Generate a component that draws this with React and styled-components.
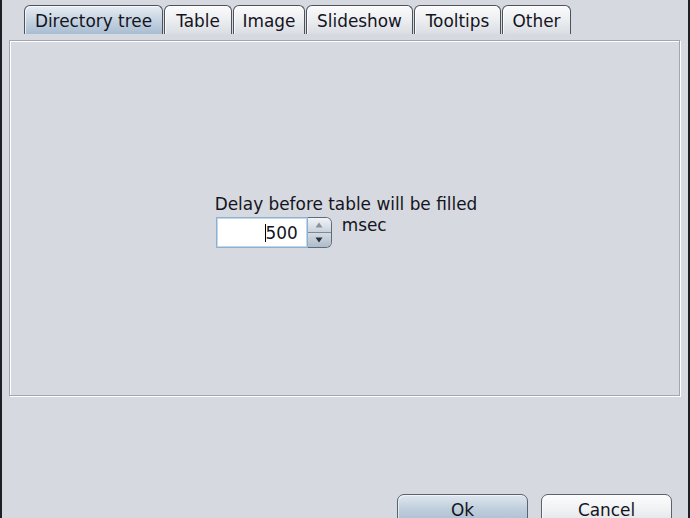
import React from "react";
import styled, { createGlobalStyle } from "styled-components";

const Global = createGlobalStyle`
  html, body { margin: 0; padding: 0; overflow: hidden; }
  body { background: #d6d9df; font-family: "DejaVu Sans", sans-serif; }
`;

const Window = styled.div`
  box-sizing: border-box;
  width: 690px;
  height: 518px;
  background: #d6d9df;
  border-left: 2px solid #1f2024;
  border-right: 2px solid #1f2024;
  display: flex;
  flex-direction: column;
  overflow: hidden;
  color: #14141e;
  font-size: 16.9px;
  & > * { flex-shrink: 0; }
`;

const TabBar = styled.div`
  display: flex;
  gap: 1px;
  padding: 5px 0 0 22px;
  height: 29px;
`;

const Tab = styled.div`
  box-sizing: border-box;
  width: ${(p) => p.$w}px;
  height: 29px;
  border: 1px solid #4d525b;
  border-bottom: none;
  border-radius: 6px 6px 0 0;
  display: flex;
  align-items: center;
  justify-content: center;
  padding-top: 1px;
  background: ${(p) =>
    p.$active
      ? "linear-gradient(#e6edf4 0%, #c9d6e3 45%, #a9bdd1 100%)"
      : "linear-gradient(#fbfbfc 0%, #eceef1 50%, #dadde2 100%)"};
  box-shadow: inset 1px 1px 0 rgba(255,255,255,0.7);
`;

const Panel = styled.div`
  box-sizing: border-box;
  margin: 6px 8px 0 7px;
  height: 356px;
  border: 1px solid #a3a6ac;
  box-shadow: inset 1px 1px 0 #fff, 1px 1px 0 #fff;
  display: flex;
  align-items: center;
  justify-content: center;
`;

const Group = styled.div`
  display: flex;
  flex-direction: column;
  margin-top: 6px;
  margin-left: 3px;
`;

const Label = styled.div`
  line-height: 20px;
  margin-bottom: 3px;
`;

const Row = styled.div`
  display: flex;
  align-items: flex-start;
  gap: 10px;
  padding-left: 1px;
`;

const Spinner = styled.div`
  display: flex;
  height: 31px;
`;

const Field = styled.div`
  box-sizing: border-box;
  width: 92px;
  height: 31px;
  background: #fff;
  border: 1px solid #8fb0d2;
  box-shadow: inset 0 0 0 1px #c3d5e8;
  display: flex;
  align-items: center;
  justify-content: flex-end;
  padding-right: 9px;
`;

const Caret = styled.span`
  display: inline-block;
  width: 1px;
  height: 18px;
  background: #000;
  margin-right: -1px;
`;

const Arrows = styled.div`
  box-sizing: border-box;
  width: 24px;
  height: 31px;
  border: 1px solid #5f6b78;
  border-left: none;
  border-radius: 0 6px 6px 0;
  display: flex;
  flex-direction: column;
  overflow: hidden;
`;

const ArrowBtn = styled.div`
  flex: 1;
  display: flex;
  align-items: center;
  justify-content: center;
  background: ${(p) =>
    p.$down
      ? "linear-gradient(#d3dce6, #aebbc9)"
      : "linear-gradient(#f1f4f7, #c9d2dc)"};
  border-top: ${(p) => (p.$down ? "1px solid #7d8996" : "none")};
`;

const Unit = styled.div`
  line-height: 20px;
  margin-top: -2px;
`;

const Footer = styled.div`
  display: flex;
  justify-content: flex-end;
  gap: 13px;
  padding: 98px 16px 0 0;
`;

const Button = styled.div`
  box-sizing: border-box;
  width: 131px;
  height: 32px;
  border: 1px solid #5c626b;
  border-radius: 7px;
  display: flex;
  justify-content: center;
  padding-top: 5px;
  background: ${(p) =>
    p.$primary
      ? "linear-gradient(#dfe7ef 0%, #c0cfdd 45%, #a7bace 100%)"
      : "linear-gradient(#fcfcfd 0%, #eff1f3 50%, #dfe2e6 100%)"};
  box-shadow: inset 1px 1px 0 rgba(255,255,255,0.6);
`;

const tabs = [
  ["Directory tree", 139, true],
  ["Table", 68],
  ["Image", 72],
  ["Slideshow", 107],
  ["Tooltips", 87],
  ["Other", 69],
];

export default function App() {
  return (
    <>
      <Global />
      <Window>
        <TabBar>
          {tabs.map(([t, w, a]) => (
            <Tab key={t} $w={w} $active={a}>
              {t}
            </Tab>
          ))}
        </TabBar>
        <Panel>
          <Group>
            <Label>Delay before table will be filled</Label>
            <Row>
              <Spinner>
                <Field>
                  <Caret />
                  500
                </Field>
                <Arrows>
                  <ArrowBtn>
                    <svg width="8" height="6" viewBox="0 0 8 6">
                      <path d="M4 0.5 L7.5 5.5 L0.5 5.5 Z" fill="#8a9199" />
                    </svg>
                  </ArrowBtn>
                  <ArrowBtn $down>
                    <svg width="8" height="6" viewBox="0 0 8 6">
                      <path d="M0.5 0.5 L7.5 0.5 L4 5.5 Z" fill="#2b2f36" />
                    </svg>
                  </ArrowBtn>
                </Arrows>
              </Spinner>
              <Unit>msec</Unit>
            </Row>
          </Group>
        </Panel>
        <Footer>
          <Button $primary>Ok</Button>
          <Button>Cancel</Button>
        </Footer>
      </Window>
    </>
  );
}
